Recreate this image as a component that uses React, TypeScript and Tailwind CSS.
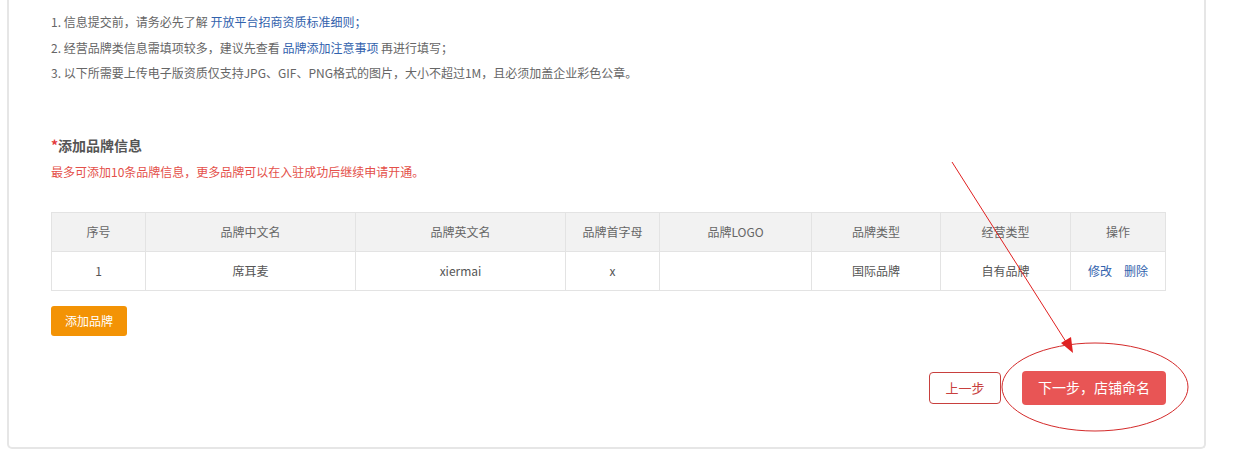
import React from "react";

const cols = [94, 210, 210, 94, 152, 129, 130, 95];
const heads = ["序号", "品牌中文名", "品牌英文名", "品牌首字母", "品牌LOGO", "品牌类型", "经营类型", "操作"];

export default function App() {
  const font = { fontFamily: '"Noto Sans CJK SC", "Noto Sans", sans-serif' };
  return (
    <div className="relative w-[1253px] h-[456px] bg-white overflow-hidden" style={font}>
      <div className="ml-[7px] w-[1199px] border-x-2 border-b-2 border-[#e6e6e6] rounded-b-[5px] pl-[42px] pr-[38px] pt-[9px] pb-[42px]">
        <div className="text-[12px] leading-[25.5px] text-[#666]">
          <p>
            1. 信息提交前，请务必先了解 <span className="text-[#3262ad]">开放平台招商资质标准细则；</span>
          </p>
          <p>
            2. 经营品牌类信息需填项较多，建议先查看 <span className="text-[#3262ad]">品牌添加注意事项</span> 再进行填写；
          </p>
          <p>3. 以下所需要上传电子版资质仅支持JPG、GIF、PNG格式的图片，大小不超过1M，且必须加盖企业彩色公章。</p>
        </div>
        <div className="mt-[49px] text-[14px] leading-[20px] font-bold text-[#555]">
          <span className="text-[#e4393c]">*</span>添加品牌信息
        </div>
        <div className="mt-[7px] text-[12px] leading-[20px] text-[#e4504a]">
          最多可添加10条品牌信息，更多品牌可以在入驻成功后继续申请开通。
        </div>
        <table className="mt-[30px] w-[1114px] border-collapse text-[12px] table-fixed">
          <colgroup>
            {cols.map((w, i) => (
              <col key={i} style={{ width: w }} />
            ))}
          </colgroup>
          <thead>
            <tr className="h-[39px] bg-[#f2f2f2]">
              {heads.map((h) => (
                <th key={h} className="border border-[#e3e3e3] font-normal text-[#666] text-center">
                  {h}
                </th>
              ))}
            </tr>
          </thead>
          <tbody>
            <tr className="h-[39px] text-[#555] text-center">
              <td className="border border-[#e3e3e3]">1</td>
              <td className="border border-[#e3e3e3]">席耳麦</td>
              <td className="border border-[#e3e3e3]">xiermai</td>
              <td className="border border-[#e3e3e3]">x</td>
              <td className="border border-[#e3e3e3]"></td>
              <td className="border border-[#e3e3e3]">国际品牌</td>
              <td className="border border-[#e3e3e3]">自有品牌</td>
              <td className="border border-[#e3e3e3]">
                <span className="text-[#3262ad]">修改</span>
                <span className="ml-[12px] text-[#3262ad]">删除</span>
              </td>
            </tr>
          </tbody>
        </table>
        <div className="mt-[15px] w-[76px] h-[30px] rounded-[3px] bg-[#f39305] text-white text-[12px] flex items-center justify-center">
          添加品牌
        </div>
        <div className="mt-[35px] flex justify-end items-center gap-[21px]">
          <div className="w-[72px] h-[32px] rounded-[4px] border border-[#c8403e] text-[#c8403e] text-[13px] flex items-center justify-center">
            上一步
          </div>
          <div className="w-[144px] h-[34px] rounded-[4px] bg-[#e85555] text-white text-[14px] flex items-center justify-center">
            下一步，店铺命名
          </div>
        </div>
      </div>
      <svg className="absolute left-0 top-0 pointer-events-none" width="1253" height="456">
        <line x1="952" y1="162" x2="1068" y2="345" stroke="#e02020" strokeWidth="1" />
        <polygon points="1073,353 1061,343 1071,337" fill="#e02020" />
        <ellipse cx="1095" cy="387" rx="93" ry="44" fill="none" stroke="#d42a2a" strokeWidth="1" />
      </svg>
    </div>
  );
}
